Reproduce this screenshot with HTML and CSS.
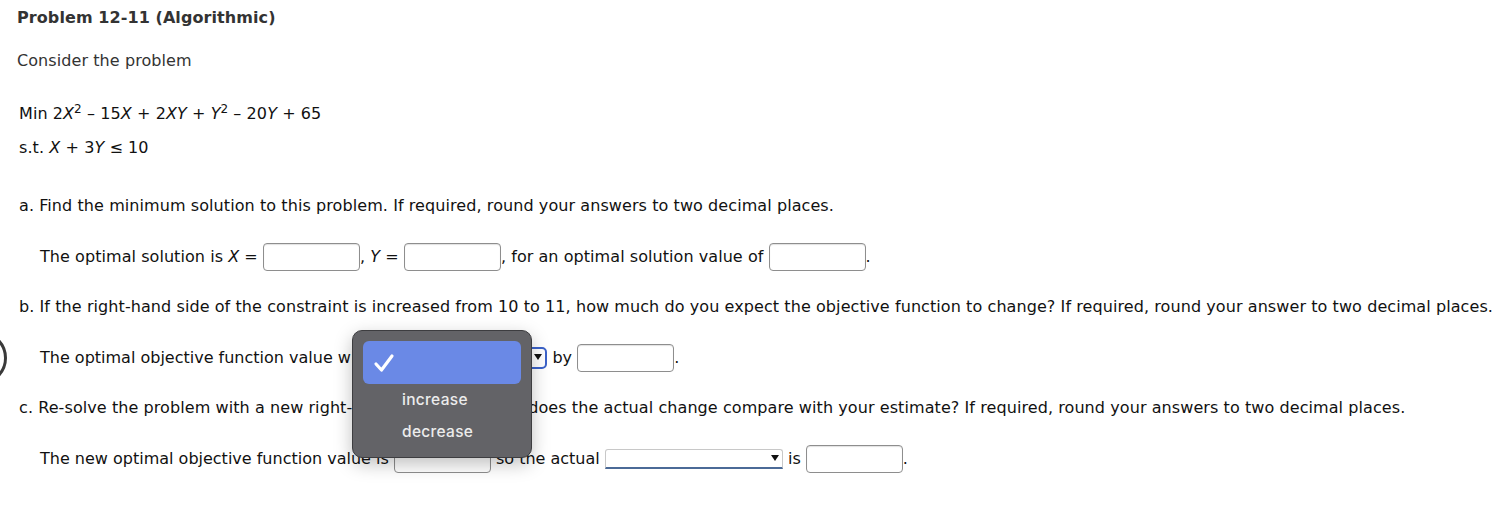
FILE: index.html
```html
<!DOCTYPE html>
<html>
<head>
<meta charset="utf-8">
<link rel="stylesheet" href="styles.css">
</head>
<body>
<div class="page">
  <div class="ring"></div>
  <h1 class="title">Problem 12-11 (Algorithmic)</h1>
  <p class="intro">Consider the problem</p>
  <p class="math first">Min 2<i>X</i><sup>2</sup> &ndash; 15<i>X</i> + 2<i>XY</i> + <i>Y</i><sup>2</sup> &ndash; 20<i>Y</i> + 65</p>
  <p class="math second">s.t. <i>X</i> + 3<i>Y</i> &le; 10</p>

  <p class="q qa">a. Find the minimum solution to this problem. If required, round your answers to two decimal places.</p>
  <div class="ans ans-a">The optimal solution is <i>X</i>&nbsp;=&nbsp;<span class="box"></span>, <i>Y</i>&nbsp;=&nbsp;<span class="box"></span>, for an optimal solution value of <span class="box"></span>.</div>

  <p class="q">b. If the right-hand side of the constraint is increased from 10 to 11, how much do you expect the objective function to change? If required, round your answer to two decimal places.</p>
  <div class="ans">The optimal objective function value will <span class="sel focus"><span class="arrow"></span></span> by <span class="box"></span>.</div>

  <p class="q">c. Re-solve the problem with a new right-hand side of 11. How does the actual change compare with your estimate? If required, round your answers to two decimal places.</p>
  <div class="ans">The new optimal objective function value is <span class="box"></span> so the actual <span class="sel plain"><span class="arrow"></span></span> is <span class="box"></span>.</div>

  <div class="popup">
    <div class="opt chosen"><svg class="check" width="22" height="20" viewBox="0 0 22 20"><path d="M3 11 L8.5 17 L19 3" fill="none" stroke="#fff" stroke-width="3.2" stroke-linecap="round" stroke-linejoin="round"/></svg></div>
    <div class="opt">increase</div>
    <div class="opt">decrease</div>
  </div>
</div>
</body>
</html>
```
FILE: styles.css
```css
html, body {
  margin: 0;
  padding: 0;
  background: #fff;
}
.page {
  position: relative;
  width: 1508px;
  height: 522px;
  overflow: hidden;
  font-family: "DejaVu Sans", Verdana, sans-serif;
  font-size: 16px;
  letter-spacing: 0.08px;
  color: #111;
}
p, h1 {
  margin: 0;
}
.title {
  margin: 8px 0 0 17px;
  height: 20px;
  line-height: 20px;
  font-size: 16px;
  font-weight: bold;
  color: #333;
}
.intro {
  margin: 23px 0 0 17px;
  height: 20px;
  line-height: 20px;
  color: #333;
}
.math {
  margin-left: 19px;
  height: 20px;
  line-height: 20px;
}
.math.first { margin-top: 33px; }
.math.second { margin-top: 14px; }
sup {
  font-size: 12px;
  line-height: 0;
  vertical-align: 6px;
}
.q {
  margin: 26px 0 0 19px;
  height: 20px;
  line-height: 20px;
  white-space: nowrap;
}
.q.qa { margin-top: 38px; }
.ans {
  margin: 27px 0 0 40px;
  height: 28px;
  line-height: 28px;
  white-space: nowrap;
  letter-spacing: 0;
}
.ans.ans-a { letter-spacing: 0.06px; }
.box {
  display: inline-block;
  vertical-align: top;
  width: 95px;
  height: 26px;
  border: 1px solid #8e8e8e;
  border-radius: 4px;
  box-shadow: inset 0 1px 1px rgba(0,0,0,0.12);
  background: #fff;
}
.sel {
  display: inline-block;
  position: relative;
  vertical-align: top;
  background: #fff;
  box-sizing: border-box;
}
.sel.focus {
  width: 178px;
  height: 22px;
  margin-top: 3px;
  border: 2px solid #3b62c9;
  border-radius: 5px;
}
.sel.plain {
  width: 178px;
  height: 20px;
  margin-top: 4px;
  border: 1px solid #c8c8c8;
  border-bottom: 2px solid #4b6a97;
  border-radius: 3px 3px 0 0;
}
.arrow {
  position: absolute;
  right: 3px;
  top: 5px;
  width: 0;
  height: 0;
  border-left: 4.5px solid transparent;
  border-right: 4.5px solid transparent;
  border-top: 6px solid #111;
}
.ring {
  position: absolute;
  left: -47px;
  top: 331px;
  width: 48px;
  height: 48px;
  border: 3px solid #3a3a3a;
  border-radius: 50%;
}
.popup {
  position: absolute;
  left: 352px;
  top: 330px;
  width: 180px;
  height: 128px;
  box-sizing: border-box;
  padding: 10px 10px 0 10px;
  background: #636367;
  border: 1px solid #3d3d40;
  border-radius: 10px;
  box-shadow: 0 6px 18px rgba(0,0,0,0.25);
  font-family: "Inter", "Liberation Sans", sans-serif;
  font-size: 15.5px;
  letter-spacing: 0.3px;
  font-weight: 500;
  color: #ececec;
}
.opt {
  height: 32px;
  line-height: 32px;
  padding-left: 39px;
}
.opt.chosen {
  height: 43px;
  padding-left: 10px;
  background: #6a89e6;
  border-radius: 6px;
  display: flex;
  align-items: center;
}
.check { display: block; }
```
